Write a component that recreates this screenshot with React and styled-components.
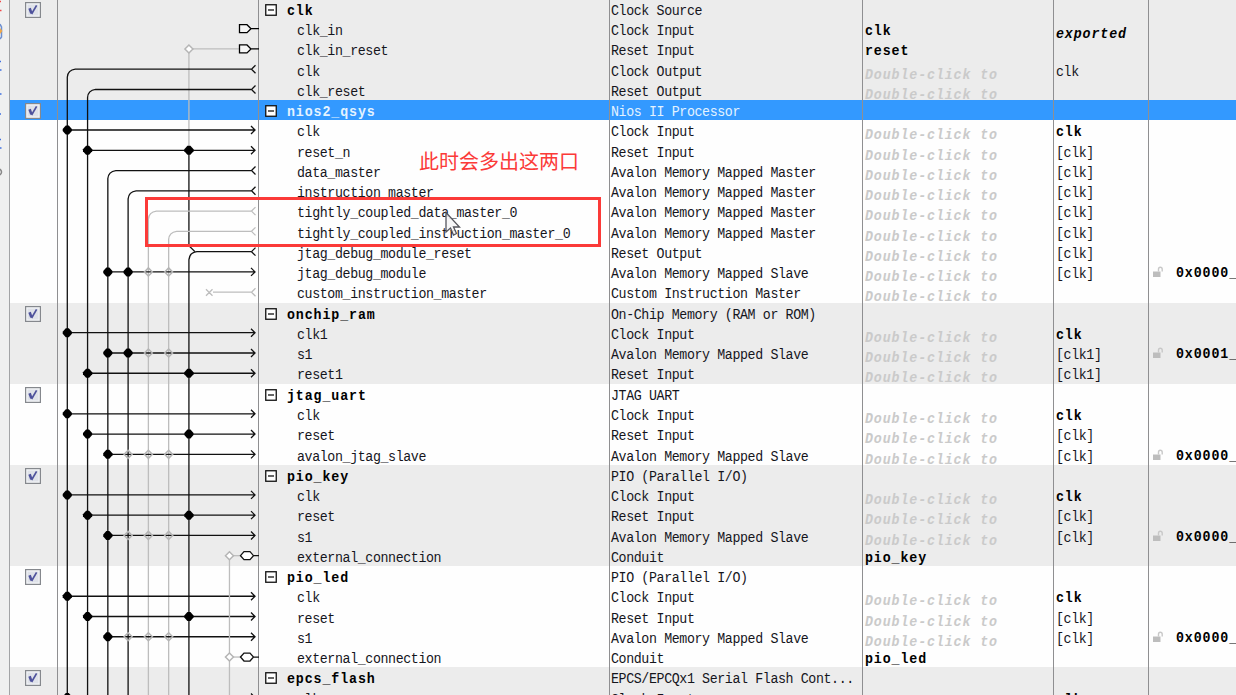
import React from 'react';
import styled, { createGlobalStyle } from 'styled-components';

const ROW = 20.27;
const PLACEHOLDER = 'Double-click to';

const GlobalStyle = createGlobalStyle`
  html, body {
    margin: 0;
    padding: 0;
    overflow: hidden;
  }
`;

const Page = styled.div`
  display: flex;
  width: 1236px;
  height: 695px;
  overflow: hidden;
  position: relative;
  background-color: #fefefe;
  font-family: 'Liberation Mono', monospace;
  color: #15151c;
`;

const SideStrip = styled.div`
  flex: none;
  width: 10px;
  height: 695px;
  box-sizing: border-box;
  background-color: #eff0f0;
  border-right: 1.5px solid #a2a4a6;

  svg {
    display: block;
  }
`;

const Table = styled.div`
  position: relative;
  flex: 1;
  margin-top: -1.3px;
`;

const Row = styled.div`
  display: grid;
  grid-template-columns: 48px 201px 351px 253px 191px 95px 87px;
  height: ${ROW}px;
  background-color: ${(p) => (p.$selected ? '#3399ff' : p.$shaded ? '#ececec' : '#fefefe')};
  color: ${(p) => (p.$selected ? '#e4f3ff' : 'inherit')};
`;

const Cell = styled.div`
  display: flex;
  align-items: flex-start;
  box-sizing: border-box;
  height: ${ROW}px;
  border-right: 1.5px solid #8f8f91;
  min-width: 0;

  &:last-child {
    border-right: none;
  }
`;

const CheckCell = styled(Cell)`
  padding: 3px 0 0 15px;
`;

const NameCell = styled(Cell)`
  padding-left: ${(p) => (p.$header ? 5 : 37)}px;
`;

const ValueCell = styled(Cell)`
  padding-left: 1px;
`;

const ToggleBox = styled.svg`
  flex: none;
  margin: 5px 9px 0 1px;
`;

const Text = styled.span`
  white-space: pre;
  font-size: 13.3px;
  letter-spacing: -0.39px;
  line-height: 16px;
  padding: 5px 0 0 1px;
  transform: translateY(0.6px) scaleY(1.13);
  transform-origin: 0 17px;
`;

const BoldText = styled(Text)`
  font-weight: 700;
  letter-spacing: 0.88px;
  transform: translateY(0.5px) scaleY(1.06);
  color: ${(p) => (p.$selected ? '#e4f3ff' : '#000')};
`;

const ItalicText = styled(BoldText)`
  font-style: italic;
  padding-top: 7px;
  color: ${(p) => (p.$muted ? '#cacaca' : '#000')};
`;

const AddressText = styled(BoldText)`
  padding: 4px 0 0 11px;
`;

const LockIcon = styled.svg`
  flex: none;
  margin: 4px 0 0 4px;
`;

const Wires = styled.svg`
  position: absolute;
  left: 48px;
  top: 1.3px;
  pointer-events: none;
`;

const Highlight = styled.div`
  position: absolute;
  left: 145px;
  top: 197px;
  width: 456px;
  height: 50px;
  box-sizing: border-box;
  border: 3px solid #fb3a38;
`;

const Note = styled.div`
  position: absolute;
  left: 419px;
  top: 147px;
  font-family: 'Noto Sans CJK SC', sans-serif;
  font-size: 20px;
  line-height: 28px;
  color: #fb3a38;
  white-space: nowrap;
`;

const Pointer = styled.svg`
  position: absolute;
  left: 444px;
  top: 211px;
`;

// header rows open a module, its ports follow
const modules = [
  {
    name: 'clk',
    desc: 'Clock Source',
    shaded: true,
    ports: [
      { name: 'clk_in', desc: 'Clock Input', exp: 'clk', clock: 'exported' },
      { name: 'clk_in_reset', desc: 'Reset Input', exp: 'reset' },
      { name: 'clk', desc: 'Clock Output', clock: 'clk', thin: true },
      { name: 'clk_reset', desc: 'Reset Output' },
    ],
  },
  {
    name: 'nios2_qsys',
    desc: 'Nios II Processor',
    selected: true,
    ports: [
      { name: 'clk', desc: 'Clock Input', clock: 'clk' },
      { name: 'reset_n', desc: 'Reset Input', clock: '[clk]' },
      { name: 'data_master', desc: 'Avalon Memory Mapped Master', clock: '[clk]' },
      { name: 'instruction_master', desc: 'Avalon Memory Mapped Master', clock: '[clk]' },
      { name: 'tightly_coupled_data_master_0', desc: 'Avalon Memory Mapped Master', clock: '[clk]' },
      { name: 'tightly_coupled_instruction_master_0', desc: 'Avalon Memory Mapped Master', clock: '[clk]' },
      { name: 'jtag_debug_module_reset', desc: 'Reset Output', clock: '[clk]' },
      { name: 'jtag_debug_module', desc: 'Avalon Memory Mapped Slave', clock: '[clk]', address: '0x0000_' },
      { name: 'custom_instruction_master', desc: 'Custom Instruction Master' },
    ],
  },
  {
    name: 'onchip_ram',
    desc: 'On-Chip Memory (RAM or ROM)',
    shaded: true,
    ports: [
      { name: 'clk1', desc: 'Clock Input', clock: 'clk' },
      { name: 's1', desc: 'Avalon Memory Mapped Slave', clock: '[clk1]', address: '0x0001_' },
      { name: 'reset1', desc: 'Reset Input', clock: '[clk1]' },
    ],
  },
  {
    name: 'jtag_uart',
    desc: 'JTAG UART',
    ports: [
      { name: 'clk', desc: 'Clock Input', clock: 'clk' },
      { name: 'reset', desc: 'Reset Input', clock: '[clk]' },
      { name: 'avalon_jtag_slave', desc: 'Avalon Memory Mapped Slave', clock: '[clk]', address: '0x0000_' },
    ],
  },
  {
    name: 'pio_key',
    desc: 'PIO (Parallel I/O)',
    shaded: true,
    ports: [
      { name: 'clk', desc: 'Clock Input', clock: 'clk' },
      { name: 'reset', desc: 'Reset Input', clock: '[clk]' },
      { name: 's1', desc: 'Avalon Memory Mapped Slave', clock: '[clk]', address: '0x0000_' },
      { name: 'external_connection', desc: 'Conduit', exp: 'pio_key' },
    ],
  },
  {
    name: 'pio_led',
    desc: 'PIO (Parallel I/O)',
    ports: [
      { name: 'clk', desc: 'Clock Input', clock: 'clk' },
      { name: 'reset', desc: 'Reset Input', clock: '[clk]' },
      { name: 's1', desc: 'Avalon Memory Mapped Slave', clock: '[clk]', address: '0x0000_' },
      { name: 'external_connection', desc: 'Conduit', exp: 'pio_led' },
    ],
  },
  {
    name: 'epcs_flash',
    desc: 'EPCS/EPCQx1 Serial Flash Cont...',
    shaded: true,
    ports: [{ name: 'clk', desc: 'Clock Input', clock: 'clk' }],
  },
];

// wire geometry: k is the bus column, i is the table row
const wx = (k) => 9.3 + ROW * k;
const wy = (i) => 8.4 + ROW * i;

const BLACK = '#111';
const GREY = '#bdbdbd';

const outputs = [
  { k: 0, i: 3 },
  { k: 1, i: 4 },
  { k: 2, i: 8 },
  { k: 3, i: 9 },
  { k: 4, i: 10, muted: true },
  { k: 5, i: 11, muted: true },
  { k: 6, i: 12 },
];

const inputs = [
  { i: 6, on: [0] },
  { i: 7, on: [1, 6] },
  { i: 13, on: [2, 3], off: [4, 5] },
  { i: 16, on: [0] },
  { i: 17, on: [2, 3], off: [4, 5] },
  { i: 18, on: [1, 6] },
  { i: 20, on: [0] },
  { i: 21, on: [1, 6] },
  { i: 22, on: [2], off: [3, 4, 5] },
  { i: 24, on: [0] },
  { i: 25, on: [1, 6] },
  { i: 26, on: [2], off: [3, 4, 5] },
  { i: 29, on: [0] },
  { i: 30, on: [1, 6] },
  { i: 31, on: [2], off: [3, 4, 5] },
  { i: 34, on: [0] },
];

function Diamond({ x, y, filled }) {
  return (
    <path
      d={`M${x - 4} ${y}L${x} ${y - 4}L${x + 4} ${y}L${x} ${y + 4}Z`}
      fill={filled ? '#fff' : 'none'}
      stroke="#b5b5b5"
      strokeWidth="1.5"
    />
  );
}

function Dot({ x, y }) {
  return (
    <path
      d={`M${x - 4.6} ${y - 1}L${x - 1.5} ${y - 4.5}H${x + 1.5}L${x + 4.6} ${y - 1}V${y + 1}L${x + 1.5} ${y + 4.5}H${x - 1.5}L${x - 4.6} ${y + 1}Z`}
      fill="#000"
    />
  );
}

function Wiring() {
  return (
    <Wires width="201" height="695" viewBox="0 0 201 695" fill="none" strokeWidth="1.3">
      <path d={`M${wx(6)} ${wy(2)}V${wy(7)}M${wx(6)} ${wy(2)}H181`} stroke={GREY} />
      <path d={`M${wx(6)} ${wy(7)}V${wy(12) - 6}L${wx(6) + 6} ${wy(12)}`} stroke={BLACK} />
      {outputs.map(({ k, i, muted }) => (
        <g key={k} stroke={muted ? GREY : BLACK}>
          <path d={`M${wx(k)} 695V${wy(i) + 8}Q${wx(k) + 0.5} ${wy(i) + 1} ${wx(k) + 8} ${wy(i)}H193`} />
          <path d={`M197.5 ${wy(i) - 4}L193.5 ${wy(i)}L197.5 ${wy(i) + 4}`} />
        </g>
      ))}
      {inputs.map(({ i, on, off = [] }) => (
        <g key={i}>
          <path d={`M${wx(on[0])} ${wy(i)}H197M193 ${wy(i) - 4}L197 ${wy(i)}L193 ${wy(i) + 4}`} stroke={BLACK} />
          {off.map((k) => (
            <Diamond key={k} x={wx(k)} y={wy(i)} />
          ))}
          {on.map((k) => (
            <Dot key={k} x={wx(k)} y={wy(i)} />
          ))}
        </g>
      ))}
      <Diamond x={wx(6)} y={wy(2)} filled />
      {[1, 2].map((i) => (
        <path
          key={i}
          d={`M181.5 ${wy(i) - 4}H189L193 ${wy(i)}L189 ${wy(i) + 4}H181.5ZM193 ${wy(i)}H201`}
          stroke="#000"
          fill="#f6f6f6"
        />
      ))}
      <path d={`M155 ${wy(14)}H193M197.5 ${wy(14) - 4}L193.5 ${wy(14)}L197.5 ${wy(14) + 4}M148 ${wy(14) - 3}l6.5 6.5m0 -6.5l-6.5 6.5`} stroke={GREY} />
      <path d={`M${wx(8)} ${wy(27)}V695`} stroke={GREY} />
      {[27, 32].map((i) => (
        <g key={i}>
          <path d={`M${wx(8)} ${wy(i)}H183`} stroke={GREY} />
          <path
            d={`M182.5 ${wy(i)}L186 ${wy(i) - 4}H192L195.5 ${wy(i)}L192 ${wy(i) + 4}H186ZM195.5 ${wy(i)}H201`}
            stroke={BLACK}
            fill="#fff"
          />
          <Diamond x={wx(8)} y={wy(i)} filled />
        </g>
      ))}
    </Wires>
  );
}

function CheckBox() {
  return (
    <svg width="16" height="16" viewBox="0 0 16 16">
      <rect x="0.6" y="0.6" width="14.8" height="14.8" fill="#f2f4f7" stroke="#85888d" strokeWidth="1.2" />
      <rect x="2.5" y="2.5" width="11" height="11" fill="#dfe2e9" />
      <path d="M4.6 6.2L6.4 11.4" fill="none" stroke="#4e529c" strokeWidth="2.6" />
      <path d="M6.6 12L11.6 3.4" fill="none" stroke="#4e529c" strokeWidth="1.7" />
    </svg>
  );
}

function Lock() {
  return (
    <LockIcon width="12" height="13" viewBox="0 0 12 13">
      <rect x="0" y="5.5" width="7.5" height="5.5" fill="#bdbdbd" />
      <path d="M5.5 5.5V3.2Q5.5 1.3 7.3 1.3Q9.2 1.3 9.2 3.2V5.5" fill="none" stroke="#c8c8c8" strokeWidth="1.4" />
    </LockIcon>
  );
}

function ModuleHeader({ module }) {
  return (
    <Row $shaded={module.shaded} $selected={module.selected}>
      <CheckCell>
        <CheckBox />
      </CheckCell>
      <Cell />
      <NameCell $header>
        <ToggleBox width="12" height="12" viewBox="0 0 12 12">
          <rect x="0.75" y="0.75" width="10.5" height="10.5" fill="#fff" stroke="#111" strokeWidth="1.3" />
          <path d="M3 6H9" stroke="#111" strokeWidth="1.3" />
        </ToggleBox>
        <BoldText $selected={module.selected}>{module.name}</BoldText>
      </NameCell>
      <Cell>
        <Text>{module.desc}</Text>
      </Cell>
      <Cell />
      <Cell />
      <Cell />
    </Row>
  );
}

function ClockLabel({ port }) {
  if (!port.clock) return null;
  if (port.clock === 'exported') return <ItalicText>{port.clock}</ItalicText>;
  if (port.clock === 'clk' && !port.thin) return <BoldText>{port.clock}</BoldText>;
  return <Text>{port.clock}</Text>;
}

function PortRow({ port, shaded }) {
  return (
    <Row $shaded={shaded}>
      <Cell />
      <Cell />
      <NameCell>
        <Text>{port.name}</Text>
      </NameCell>
      <Cell>
        <Text>{port.desc}</Text>
      </Cell>
      <ValueCell>
        {port.exp ? <BoldText>{port.exp}</BoldText> : <ItalicText $muted>{PLACEHOLDER}</ItalicText>}
      </ValueCell>
      <ValueCell>
        <ClockLabel port={port} />
      </ValueCell>
      <Cell>
        {port.address && (
          <>
            <Lock />
            <AddressText>{port.address}</AddressText>
          </>
        )}
      </Cell>
    </Row>
  );
}

function App() {
  return (
    <Page>
      <GlobalStyle />
      <SideStrip>
        <svg width="8" height="190" viewBox="0 0 8 190" fill="none" strokeWidth="1.5">
          <path d="M0 1.5H1M0 10.5H1.5" stroke="#f04848" />
          <path d="M0 24L1.5 27V37L0 39" stroke="#6d8fd0" />
          <path d="M0 28L2.5 31L0 34" fill="#f0a848" />
          <path d="M0 61.5H1M0 70H1.5M0 94H1.5M0 114H1M0 139.5H1M0 148H1.5" stroke="#3f6fe0" />
          <path d="M0 169Q3 172 0 175" stroke="#888" />
        </svg>
      </SideStrip>
      <Table>
        {modules.map((module) => (
          <React.Fragment key={module.name}>
            <ModuleHeader module={module} />
            {module.ports.map((port) => (
              <PortRow key={port.name} port={port} shaded={module.shaded} />
            ))}
          </React.Fragment>
        ))}
        <Wiring />
      </Table>
      <Highlight />
      <Note>此时会多出这两口</Note>
      <Pointer width="18" height="26" viewBox="0 0 18 26">
        <path d="M2 1.5V21L6.5 17L9.5 24L12.5 22.5L9.5 16H15.5Z" fill="#f4f4f6" fillOpacity="0.85" stroke="#55555c" strokeWidth="1.3" />
      </Pointer>
    </Page>
  );
}

export default App;
